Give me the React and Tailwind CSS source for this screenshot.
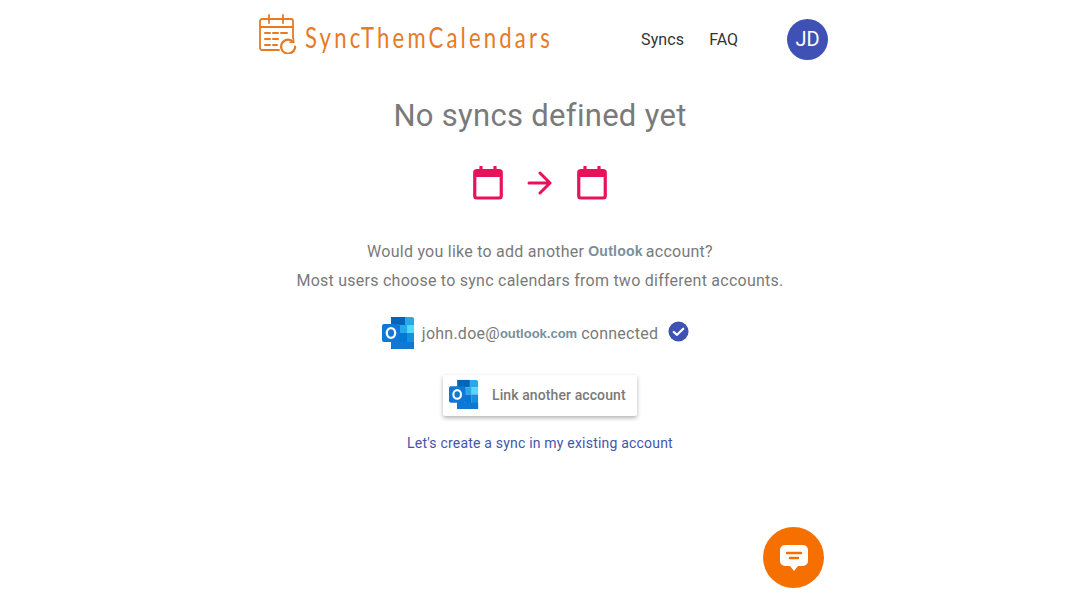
const Outlook = ({ s = 33, className = "" }) => (
  <svg width={s} height={s} viewBox="0 0 33 33" className={className}>
    <path d="M9 1h14v8H9z" fill="#0364B8" />
    <path d="M23 1h7a2 2 0 0 1 2 2v6h-9z" fill="#28A8EA" />
    <path d="M9 9h8v8H9z" fill="#0078D4" />
    <path d="M17 9h8v8h-8z" fill="#28A8EA" />
    <path d="M25 9h7v8h-7z" fill="#50D9FF" />
    <path d="M9 17h8v16H9z" fill="#0364B8" />
    <path d="M17 17h8v16h-8z" fill="#0078D4" />
    <path d="M25 17h7v16h-7z" fill="#1490DF" />
    <path d="M9 26h23v7H11a2 2 0 0 1-2-2z" fill="#0F78D4" />
    <rect x="0" y="8" width="18" height="18" rx="2" fill="#0F78D4" />
    <ellipse cx="9" cy="17" rx="4.2" ry="4.8" fill="none" stroke="#fff" strokeWidth="2.3" />
  </svg>
);

const Cal = () => (
  <svg width="30" height="34" viewBox="0 0 30 34" fill="none" className="shrink-0">
    <path d="M8 1v4M22 1v4" stroke="#E8125C" strokeWidth="3.2" strokeLinecap="round" />
    <rect x="1.75" y="4.5" width="26.5" height="27.5" rx="2" stroke="#E8125C" strokeWidth="3.2" />
    <rect x="2" y="4" width="26" height="7" fill="#E8125C" />
  </svg>
);

const Logo = () => (
  <svg width="38" height="42" viewBox="0 0 38 42" fill="none" stroke="#E67A25" strokeWidth="1.8" strokeLinecap="round" className="shrink-0 ml-[1px]">
    <path d="M20 38H3a2 2 0 0 1-2-2V9a2 2 0 0 1 2-2h29a2 2 0 0 1 2 2v17" />
    <path d="M1 15h33M10 3v8M24 3v8" />
    <path d="M6 21h5M14 21h5M22 21h6M6 27h5M14 27h5M6 33h5M14 33h4" strokeWidth="2" />
    <path d="M36 36a7 7 0 1 1-1.6-6" strokeWidth="2.2" />
    <path d="M36 34.5a7 7 0 0 1 .1 1.5" strokeWidth="2.2" />
    <path d="M34.5 26.5v3.8h-3.6" strokeWidth="1.6" />
  </svg>
);

export default function App() {
  return (
    <div className="w-[1080px] h-[608px] overflow-hidden bg-white flex flex-col items-center font-['Roboto',sans-serif] text-[#7a7a7a]">
      <header className="w-[570px] ml-[6px] h-[80px] shrink-0 flex items-center">
        <div className="flex items-center gap-[8px] mt-[-14px]">
          <Logo />
          <span className="mt-[7px] font-['Lato',sans-serif] font-normal text-[#E67A25] text-[28px] leading-none tracking-[4px] whitespace-nowrap w-[246px] inline-block origin-left scale-x-[0.79]">SyncThemCalendars</span>
        </div>
        <nav className="ml-auto flex items-center text-[#333] text-[16px] mt-[-2px]">
          <span className="mt-[2px] tracking-[0.1px]">Syncs</span>
          <span className="mt-[2px] ml-[25px]">FAQ</span>
          <span className="ml-[49px] w-[41px] h-[41px] rounded-full bg-[#3F51B5] text-white text-[20px] flex items-center justify-center">JD</span>
        </nav>
      </header>

      <h1 className="text-[31px] leading-[40px] mt-[16px] tracking-[0.3px]">No syncs defined yet</h1>

      <div className="flex items-center gap-[24px] mt-[30px]">
        <Cal />
        <svg width="26" height="24" viewBox="0 0 26 24" fill="none" stroke="#E8125C" strokeWidth="3" strokeLinecap="round" strokeLinejoin="round">
          <path d="M2 12h21M13 2l10 10-10 10" />
        </svg>
        <Cal />
      </div>

      <p className="mt-[37px] text-[16px] leading-[28px] flex items-center tracking-[0.25px]">
        Would you like to add another
        <span className="font-['Liberation_Sans',sans-serif] font-bold text-[#78909C] text-[14px] ml-[4px] mr-[3px] mb-[2px]">Outlook</span>
        account?
      </p>
      <p className="text-[16px] leading-[28px] tracking-[0.25px]">Most users choose to sync calendars from two different accounts.</p>

      <div className="flex items-center mt-[22px] mr-[9px] h-[34px] text-[16px]">
        <Outlook className="shrink-0 mb-[3px]" />
        <span className="ml-[7px] tracking-[0.25px]">john.doe@</span>
        <span className="font-['Liberation_Sans',sans-serif] font-bold text-[13px] text-[#78909C]">outlook.com</span>
        <span className="ml-[4px] tracking-[0.25px]">connected</span>
        <svg width="21" height="21" viewBox="0 0 22 22" className="ml-[10px] mb-[5px]">
          <circle cx="11" cy="11" r="10.5" fill="#3F51B5" />
          <path d="M6 11.5l3.5 3L16 8" fill="none" stroke="#fff" strokeWidth="2.2" strokeLinecap="round" strokeLinejoin="round" />
        </svg>
      </div>

      <button className="mt-[24px] w-[194px] h-[41px] flex items-center pl-[6px] rounded-[2px] bg-white shadow-[0_2px_4px_rgba(0,0,0,0.3)] text-[14px] font-medium text-[#7a7a7a] tracking-[0.1px]">
        <Outlook s={30} className="shrink-0 mb-[3px]" />
        <span className="ml-[13px]">Link another account</span>
      </button>

      <a className="mt-[17px] text-[14px] leading-[20px] text-[#4455AD] tracking-[0.2px]">Let's create a sync in my existing account</a>

      <div className="w-[570px] ml-[6px] flex justify-end mt-[74px] pr-[4px]">
        <div className="w-[61px] h-[61px] rounded-full bg-[#F57000] flex items-center justify-center">
          <svg width="30" height="28" viewBox="0 0 30 28">
            <path d="M6 1h18a5 5 0 0 1 5 5v11a5 5 0 0 1-5 5h-5l-4 5-4-5H6a5 5 0 0 1-5-5V6a5 5 0 0 1 5-5z" fill="#fff" />
            <path d="M8 9h14" stroke="#F57000" strokeWidth="2.4" strokeLinecap="round" />
            <path d="M11 14h8" stroke="#F57000" strokeWidth="2.4" strokeLinecap="round" />
          </svg>
        </div>
      </div>
    </div>
  );
}
